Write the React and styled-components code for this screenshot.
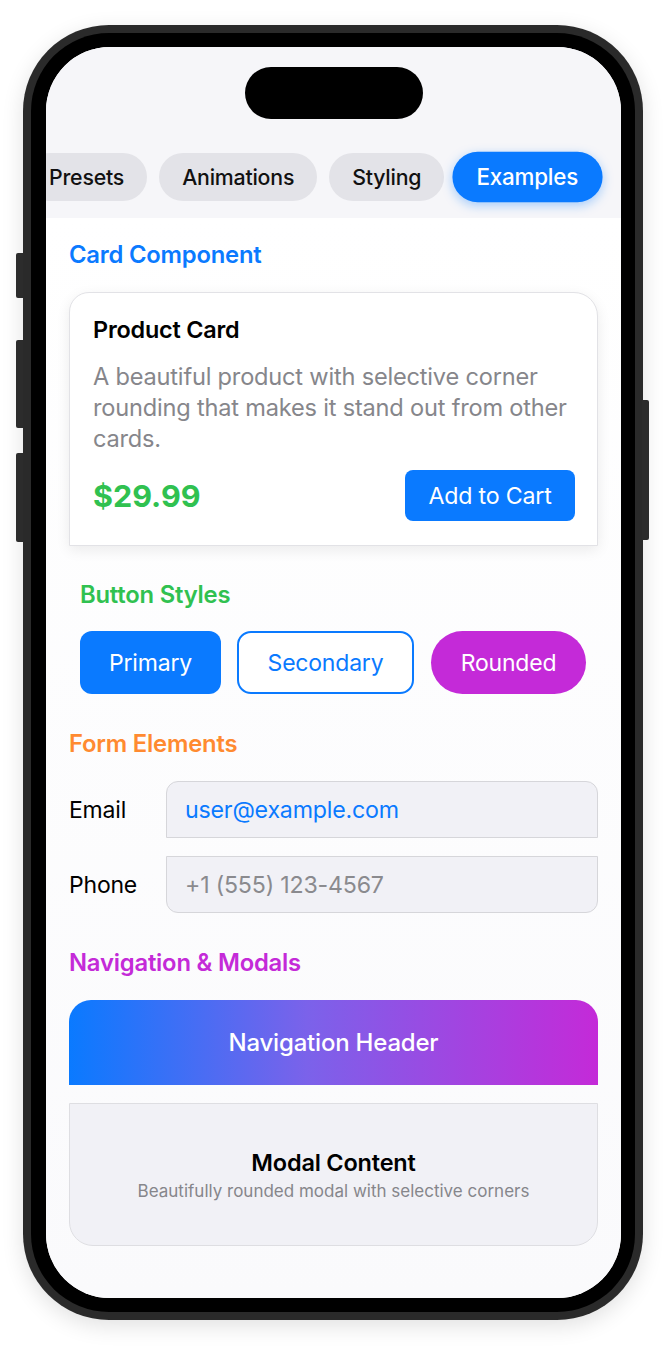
import React from 'react'
import styled, { createGlobalStyle } from 'styled-components'

const TABS = ['Presets', 'Animations', 'Styling', 'Examples']
const ACTIVE_TAB = 'Examples'

const App = () => {
  return (
    <>
      <GlobalStyle />
      <Stage>
        <Phone>
          <SideButton side="left" top={228} height={45} />
          <SideButton side="left" top={315} height={88} />
          <SideButton side="left" top={428} height={89} />
          <SideButton side="right" top={375} height={140} />
          <Bezel>
            <Screen>
              <TopArea>
                <Island />
                <TabStrip>
                  {TABS.map((tab) => (
                    <Tab key={tab} active={tab === ACTIVE_TAB}>
                      {tab}
                    </Tab>
                  ))}
                </TabStrip>
              </TopArea>

              <Content>
                <SectionTitle color="#0a7aff">Card Component</SectionTitle>
                <Card>
                  <CardTitle>Product Card</CardTitle>
                  <CardText>
                    A beautiful product with selective corner rounding that
                    makes it stand out from other cards.
                  </CardText>
                  <CardFooter>
                    <Price>$29.99</Price>
                    <CartButton>Add to Cart</CartButton>
                  </CardFooter>
                </Card>

                <ButtonSection>
                  <SectionTitle color="#30c150">Button Styles</SectionTitle>
                  <ButtonRow>
                    <StyleButton variant="primary">Primary</StyleButton>
                    <StyleButton variant="secondary">Secondary</StyleButton>
                    <StyleButton variant="rounded">Rounded</StyleButton>
                  </ButtonRow>
                </ButtonSection>

                <SectionTitle color="#ff8a30">Form Elements</SectionTitle>
                <Form>
                  <FieldRow>
                    <FieldLabel>Email</FieldLabel>
                    <Field corners="top" filled>
                      user@example.com
                    </Field>
                  </FieldRow>
                  <FieldRow>
                    <FieldLabel>Phone</FieldLabel>
                    <Field corners="bottom">+1 (555) 123-4567</Field>
                  </FieldRow>
                </Form>

                <SectionTitle color="#c42ad8">Navigation &amp; Modals</SectionTitle>
                <NavStack>
                  <NavHeader>Navigation Header</NavHeader>
                  <Modal>
                    <ModalTitle>Modal Content</ModalTitle>
                    <ModalText>
                      Beautifully rounded modal with selective corners
                    </ModalText>
                  </Modal>
                </NavStack>
              </Content>
            </Screen>
          </Bezel>
        </Phone>
      </Stage>
    </>
  )
}

export default App

const GlobalStyle = createGlobalStyle`
  html, body {
    margin: 0;
    padding: 0;
    background: #ffffff;
  }
  body {
    font-family: Inter, "Noto Sans", "Liberation Sans", sans-serif;
    -webkit-font-smoothing: antialiased;
  }
  * {
    box-sizing: border-box;
  }
`

const Stage = styled.div`
  width: 666px;
  height: 1360px;
  padding: 25px 23px 40px;
  display: flex;
  justify-content: center;
  align-items: flex-start;
`

const Phone = styled.div`
  position: relative;
  width: 620px;
  height: 1295px;
  border-radius: 86px;
  background: #2a2a2a;
  padding: 8px;
  box-shadow: 0 6px 22px rgba(0, 0, 0, 0.12);
`

const SideButton = styled.div`
  position: absolute;
  top: ${(p) => p.top}px;
  ${(p) => (p.side === 'left' ? 'left: -7px;' : 'right: -6px;')}
  width: 7px;
  height: ${(p) => p.height}px;
  background: #2c2c2c;
  border-radius: ${(p) => (p.side === 'left' ? '2px 0 0 2px' : '0 2px 2px 0')};
`

const Bezel = styled.div`
  width: 100%;
  height: 100%;
  border-radius: 78px;
  background: #000;
  padding: 14px 14px 14px 15px;
`

const Screen = styled.div`
  width: 100%;
  height: 100%;
  border-radius: 64px;
  overflow: hidden;
  background: #fbfbfd;
  display: flex;
  flex-direction: column;
`

const TopArea = styled.div`
  background: #f6f6f9;
  padding: 20px 0 17px;
  display: flex;
  flex-direction: column;
  align-items: center;
`

const Island = styled.div`
  width: 178px;
  height: 52px;
  border-radius: 26px;
  background: #000;
`

const TabStrip = styled.div`
  align-self: stretch;
  margin-top: 34px;
  margin-left: -20px;
  display: flex;
  gap: 12px;
  white-space: nowrap;
`

const Tab = styled.div`
  flex: none;
  height: 48px;
  padding: 0 23px;
  border-radius: 24px;
  display: flex;
  align-items: center;
  font-size: 21.3px;
  font-weight: 500;
  letter-spacing: -0.2px;
  color: ${(p) => (p.active ? '#fff' : '#111')};
  background: ${(p) => (p.active ? '#0a7aff' : '#e3e3e8')};
  box-shadow: ${(p) => (p.active ? '0 3px 10px rgba(10, 122, 255, 0.35)' : 'none')};
  transform: ${(p) => (p.active ? 'scale(1.05)' : 'none')};
`

const Content = styled.div`
  flex: 1;
  background: linear-gradient(#ffffff, #fafafc);
  padding: 22px 23px 0 23px;
  display: flex;
  flex-direction: column;
`

const SectionTitle = styled.h2`
  margin: 0;
  font-size: 23.8px;
  line-height: 30px;
  font-weight: 600;
  letter-spacing: -0.2px;
  color: ${(p) => p.color};
`

const Card = styled.div`
  margin-top: 22px;
  background: #fff;
  border: 1px solid #e2e2e6;
  border-radius: 20px 24px 0 0;
  box-shadow: 0 4px 14px rgba(0, 0, 0, 0.08);
  padding: 23px 22px 24px 23px;
`

const CardTitle = styled.div`
  font-size: 23.4px;
  line-height: 28px;
  font-weight: 600;
  letter-spacing: -0.2px;
  color: #000;
`

const CardText = styled.p`
  margin: 17px 0 0;
  font-size: 23.6px;
  line-height: 31px;
  letter-spacing: -0.2px;
  color: #86868b;
`

const CardFooter = styled.div`
  margin-top: 16px;
  display: flex;
  justify-content: space-between;
  align-items: center;
`

const Price = styled.div`
  font-size: 30.5px;
  font-weight: 700;
  color: #30c150;
`

const CartButton = styled.button`
  width: 170px;
  height: 51px;
  border: none;
  border-radius: 8px;
  background: #0a7aff;
  color: #fff;
  font-family: inherit;
  font-size: 23.2px;
  letter-spacing: -0.2px;
`

const ButtonSection = styled.div`
  padding: 34px 12px 0 11px;
  margin-bottom: 35px;
`

const ButtonRow = styled.div`
  margin-top: 21px;
  display: flex;
  gap: 16px;
`

const VARIANTS = {
  primary: 'width: 141px; background: #0a7aff; color: #fff; border: none; border-radius: 12px;',
  secondary: 'width: 177px; background: #fff; color: #0a7aff; border: 2.5px solid #0a7aff; border-radius: 14px;',
  rounded: 'width: 155px; margin-left: 1px; background: #c42ad8; color: #fff; border: none; border-radius: 32px;',
}

const StyleButton = styled.button`
  height: 63px;
  font-family: inherit;
  font-size: 23px;
  letter-spacing: -0.2px;
  ${(p) => VARIANTS[p.variant]}
`

const Form = styled.div`
  margin: 22px 0 35px;
  display: flex;
  flex-direction: column;
  gap: 18px;
`

const FieldRow = styled.div`
  display: flex;
  align-items: center;
`

const FieldLabel = styled.div`
  width: 97px;
  font-size: 23px;
  letter-spacing: -0.2px;
  color: #000;
`

const Field = styled.div`
  flex: 1;
  height: 57px;
  display: flex;
  align-items: center;
  padding: 0 18px;
  background: #f1f1f6;
  border: 1.5px solid #d6d6da;
  border-radius: ${(p) => (p.corners === 'top' ? '12px 12px 0 0' : '0 0 12px 12px')};
  font-size: 23.2px;
  letter-spacing: -0.2px;
  color: ${(p) => (p.filled ? '#0a7aff' : '#8a8a8e')};
`

const NavStack = styled.div`
  margin-top: 22px;
  display: flex;
  flex-direction: column;
  gap: 18px;
`

const NavHeader = styled.div`
  height: 85px;
  border-radius: 22px 22px 0 0;
  background: linear-gradient(90deg, #0a7aff 0%, #7b62ea 45%, #c42ad8 100%);
  display: flex;
  align-items: center;
  justify-content: center;
  color: #fff;
  font-size: 24px;
  font-weight: 500;
  letter-spacing: -0.2px;
`

const Modal = styled.div`
  height: 143px;
  border: 1.5px solid #dedee2;
  border-radius: 0 0 24px 24px;
  background: #f1f1f6;
  display: flex;
  flex-direction: column;
  align-items: center;
  justify-content: center;
`

const ModalTitle = styled.div`
  font-size: 23.5px;
  line-height: 28px;
  font-weight: 600;
  letter-spacing: -0.2px;
  color: #000;
`

const ModalText = styled.div`
  margin-top: 4px;
  font-size: 17px;
  line-height: 20px;
  color: #86868b;
`
